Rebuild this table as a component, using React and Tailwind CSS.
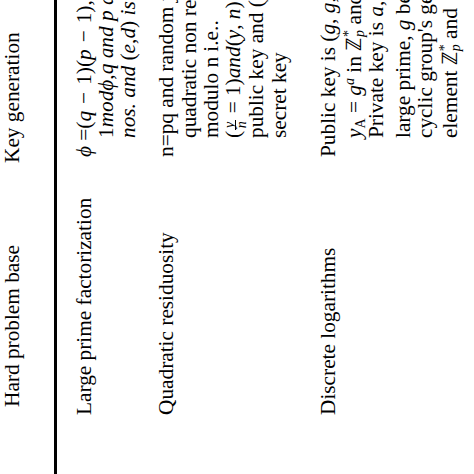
import React from 'react';

// stacked sup/sub pair, e.g. Z with * over p
const SupSub = ({ sup, sub }) => (
  <span className="inline-flex flex-col align-middle text-[14px] leading-[11px] ml-px -mt-1">
    <span>{sup}</span>
    <span className="italic">{sub}</span>
  </span>
);

const Frac = ({ num, den }) => (
  <span className="inline-flex flex-col items-center align-middle text-[14px] leading-[11px] italic mx-px">
    <span className="border-b border-black px-[2px]">{num}</span>
    <span>{den}</span>
  </span>
);

const Minus = () => <span className="mx-[7px]">−</span>;

const rows = [
  {
    name: 'Large prime factorization',
    gap: 'mt-[16px]',
    lines: [
      { h: '', body: (<><i>ϕ</i> =(<i>q</i><Minus />1)(<i>p</i><Minus />1), <i>e</i>·<i>d</i> ≡ </>) },
      { h: '', body: (<>1<i>mod</i><i>ϕ</i>,<i>q and p are large prime</i></>) },
      { h: '', body: (<><i>nos. and </i>(<i>e</i>,<i>d</i>) <i>is the key pair</i></>) },
    ],
  },
  {
    name: 'Quadratic residuosity',
    gap: 'mt-[16px]',
    lines: [
      { h: '', body: <>n=pq and random <i>y</i> is a</> },
      { h: 'mt-[1px]', body: <>quadratic non residue</> },
      { h: '', body: <>modulo n i.e..</> },
      { h: '', body: (<>(<Frac num="y" den="n" /> = 1)<i>and</i>(<i>y</i>, <i>n</i>) is</>) },
      { h: 'mt-[1px]', body: <>public key and (<i>p</i>, <i>q</i>) is</> },
      { h: 'mt-[1px]', body: <>secret key</> },
    ],
  },
  {
    name: 'Discrete logarithms',
    gap: 'mt-[27px]',
    lines: [
      { h: '', body: <>Public key is (<i>g</i>, <i>g</i>, <i>p</i>, <i>y</i>)</> },
      { h: 'mt-[4px]', body: (<><i>y</i><sub className="text-[14px] not-italic">A</sub> = <i>g</i><sup className="text-[14px] italic">a</sup> in ℤ<SupSub sup="*" sub="p" /> and</>) },
      { h: '', body: <>Private key is <i>a</i>, <i>p</i> is</> },
      { h: 'mt-[5px]', body: <>large prime, <i>g</i> be</> },
      { h: '', body: <>cyclic group's generator</> },
      { h: 'mt-[3px]', body: (<>element ℤ<SupSub sup="*" sub="p" /> and</>) },
    ],
  },
];

export default function App() {
  return (
    <div className="w-[474px] h-[474px] overflow-hidden bg-white">
      <div className="w-[474px] h-[474px] -rotate-90 whitespace-nowrap text-[21.3px] leading-[22px] text-black font-['Liberation_Serif','Times_New_Roman',serif]">
        <div className="h-[54px] pt-px pl-[59px] grid grid-cols-[258px_1fr]">
          <div className="pl-2">Hard problem base</div>
          <div className="-ml-[6px]">Key generation</div>
        </div>
        <div className="h-[3px] bg-black" />
        {rows.map((row) => (
          <div key={row.name} className={`${row.gap} pl-[59px] grid grid-cols-[258px_1fr] items-start`}>
            <div>{row.name}</div>
            <div>
              {row.lines.map((line, i) => (
                <div key={i} className={`h-[22px] ${i > 0 ? 'pl-[19px]' : ''} ${line.h}`}>
                  {line.body}
                </div>
              ))}
            </div>
          </div>
        ))}
      </div>
    </div>
  );
}
